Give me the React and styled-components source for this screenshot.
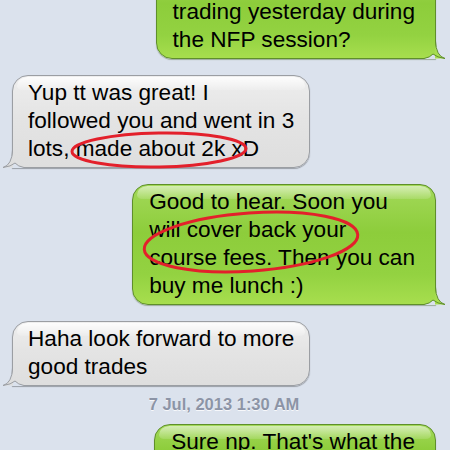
import React from "react";
import styled, { createGlobalStyle, css } from "styled-components";

const GlobalStyle = createGlobalStyle`
  html, body {
    margin: 0;
    padding: 0;
    background: #dbe2ed;
  }
  body {
    font-family: "Liberation Sans", Arial, Helvetica, sans-serif;
  }
`;

const Screen = styled.div`
  width: 450px;
  height: 450px;
  overflow: hidden;
  background: #dbe2ed;
`;

const Thread = styled.div`
  display: flex;
  flex-direction: column;
  gap: 16px;
  padding: 0 14px 0 12px;
  margin-top: -34px;
`;

const Row = styled.div`
  display: flex;
  justify-content: ${(p) => (p.$mine ? "flex-end" : "flex-start")};
`;

const greenBubble = css`
  background: linear-gradient(
    to bottom,
    #a3d95a 0%,
    #8dcd3b 40%,
    #93d241 75%,
    #a7de4e 100%
  );
  border: 1px solid #5f8f2b;
  border-radius: 16px 16px 0 16px;
  padding: 3px 20px 4px 16px;
  box-shadow: 0 1px 1px rgba(40, 70, 10, 0.35);
`;

const grayBubble = css`
  background: linear-gradient(
    to bottom,
    #eeeeee 0%,
    #e4e4e4 45%,
    #dedede 100%
  );
  border: 1px solid #9b9ea3;
  border-radius: 16px 16px 16px 0;
  padding: 3px 15px 4px 15px;
  box-shadow: 0 1px 1px rgba(0, 0, 0, 0.3);
`;

const Bubble = styled.div`
  position: relative;
  font-size: 22.6px;
  line-height: 28px;
  color: #000;
  white-space: nowrap;
  ${(p) => (p.$mine ? greenBubble : grayBubble)}

  &::before {
    content: "";
    position: absolute;
    left: 4px;
    right: 4px;
    top: 1px;
    height: 13px;
    border-radius: 13px 13px 6px 6px / 11px 11px 5px 5px;
    background: linear-gradient(
      to bottom,
      rgba(255, 255, 255, ${(p) => (p.$mine ? 0.55 : 0.85)}),
      rgba(255, 255, 255, 0.12)
    );
    pointer-events: none;
  }
`;

const Text = styled.span`
  position: relative;
`;

const TailSvg = styled.svg`
  position: absolute;
  bottom: -1px;
  width: 22px;
  height: 18px;
  overflow: visible;
  ${(p) =>
    p.$mine
      ? css`
          right: -11px;
        `
      : css`
          left: -11px;
          transform: scaleX(-1);
        `}
`;

function Tail({ mine }) {
  const fill = mine ? "#a7de4e" : "#dedede";
  const stroke = mine ? "#5f8f2b" : "#9b9ea3";
  return (
    <TailSvg $mine={mine} viewBox="0 0 22 18">
      <path d="M0,18 L0,17.5 Q6,16.5 9,13 Q13,16.5 21,17.5 L21,18 Z" fill="#dbe2ed" />
      <path d="M11,0 Q12,15 21,17.5 L11,17.5 Z" fill={fill} />
      <path
        d="M11.5,0 Q12,15 21,17.5 Q13,16.5 9,13 Q6,16.5 0,17.5"
        fill="none"
        stroke={stroke}
        strokeWidth="1"
      />
    </TailSvg>
  );
}

const Mark = styled.svg`
  position: absolute;
  left: ${(p) => p.$x}px;
  top: ${(p) => p.$y}px;
  width: ${(p) => p.$w}px;
  height: ${(p) => p.$h}px;
  overflow: visible;
  pointer-events: none;
`;

function Circle({ x, y, w, h, tilt = 0 }) {
  return (
    <Mark $x={x} $y={y} $w={w} $h={h} viewBox={`0 0 ${w} ${h}`}>
      <ellipse
        cx={w / 2}
        cy={h / 2}
        rx={w / 2 - 4}
        ry={h / 2 - 3}
        fill="none"
        stroke="#e3202b"
        strokeWidth="3"
        transform={`rotate(${tilt} ${w / 2} ${h / 2})`}
      />
    </Mark>
  );
}

const Stamp = styled.div`
  margin: -8px 0 -6px;
  text-align: center;
  font-size: 16.5px;
  line-height: 20px;
  font-weight: bold;
  color: #8c94a6;
  text-shadow: 0 1px 0 rgba(255, 255, 255, 0.8);
`;

function Message({ mine, lines, children }) {
  return (
    <Row $mine={mine}>
      <Bubble $mine={mine}>
        <Text>
          {lines.map((l, i) => (
            <React.Fragment key={i}>
              {i > 0 && <br />}
              {l}
            </React.Fragment>
          ))}
        </Text>
        {children}
        <Tail mine={mine} />
      </Bubble>
    </Row>
  );
}

export default function App() {
  return (
    <Screen>
      <GlobalStyle />
      <Thread>
        <Message
          mine
          lines={["How was your", "trading yesterday during", "the NFP session?"]}
        />
        <Message
          lines={["Yup tt was great! I", "followed you and went in 3", "lots, made about 2k xD"]}
        >
          <Circle x={55} y={54} w={182} h={40} tilt={-1} />
        </Message>
        <Message
          mine
          lines={[
            "Good to hear. Soon you",
            "will cover back your",
            "course fees. Then you can",
            "buy me lunch :)",
          ]}
        >
          <Circle x={7} y={25} w={222} h={64} tilt={-4} />
        </Message>
        <Message lines={["Haha look forward to more", "good trades"]} />
        <Stamp>7 Jul, 2013 1:30 AM</Stamp>
        <Message mine lines={["Sure np. That's what the", "course is for"]} />
      </Thread>
    </Screen>
  );
}
